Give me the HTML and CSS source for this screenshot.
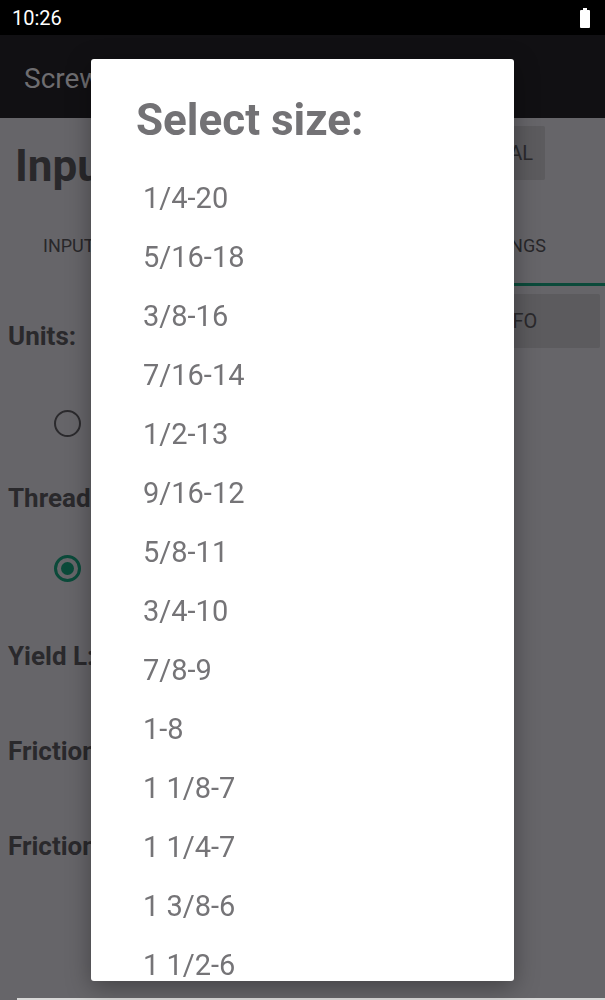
FILE: index.html
```html
<!DOCTYPE html>
<html lang="en">
<head>
    <meta charset="UTF-8">
    <meta name="viewport" content="width=device-width, initial-scale=1.0">
    <title>Screw Calculator</title>
    <link rel="stylesheet" href="styles.css">
</head>
<body>
    <!-- Status bar -->
    <div class="status-bar">
        <span class="clock">10:26</span>
        <svg class="battery" width="10" height="20" viewBox="0 0 10 20">
            <rect x="3" y="0" width="4" height="2" fill="#fff"/>
            <rect x="0" y="2" width="10" height="18" rx="1" fill="#fff"/>
        </svg>
    </div>

    <!-- App bar -->
    <header class="app-bar">
        <h1>Screw Calculator</h1>
    </header>

    <section class="page">
        <div class="page-head">
            <h2>Inputs</h2>
            <button class="flat-btn">TUTORIAL</button>
        </div>

        <nav class="tabs">
            <span class="tab first">INPUT</span>
            <span class="tab">RESULTS</span>
            <span class="tab active">SETTINGS</span>
        </nav>

        <div class="units-row">
            <h3>Units:</h3>
            <button class="flat-btn wide">MORE INFO</button>
        </div>
        <div class="radio-row first">
            <span class="radio"></span>
        </div>

        <h3 class="label">Thread:</h3>
        <div class="radio-row second">
            <span class="radio checked"></span>
        </div>

        <h3 class="label single">Yield L:</h3>
        <h3 class="label single">Friction:</h3>
        <h3 class="label single">Friction:</h3>

        <div class="bottom-edge"></div>
    </section>

    <!-- Size picker dialog -->
    <div class="dialog">
        <h2 class="dialog-title">Select size:</h2>
        <ul class="size-list">
            <li>1/4-20</li>
            <li>5/16-18</li>
            <li>3/8-16</li>
            <li>7/16-14</li>
            <li>1/2-13</li>
            <li>9/16-12</li>
            <li>5/8-11</li>
            <li>3/4-10</li>
            <li>7/8-9</li>
            <li>1-8</li>
            <li>1 1/8-7</li>
            <li>1 1/4-7</li>
            <li>1 3/8-6</li>
            <li>1 1/2-6</li>
        </ul>
    </div>
</body>
</html>
```

FILE: styles.css
```css
/* Reset */
* {
    margin: 0;
    padding: 0;
    box-sizing: border-box;
}
body {
    font-family: 'Roboto', sans-serif;
    background-color: #666569;
    color: #2a292c;
    width: 605px;
    height: 1000px;
    overflow: hidden;
}

/* Status bar */
.status-bar {
    height: 35px;
    background-color: #000;
    color: #fff;
    display: flex;
    align-items: center;
    justify-content: space-between;
    padding: 0 15px 0 12px;
}
.clock {
    font-size: 20px;
}

/* App bar (dimmed) */
.app-bar {
    height: 83px;
    background-color: #111013;
    display: flex;
    align-items: center;
    padding: 4px 0 0 24px;
}
.app-bar h1 {
    font-size: 28px;
    font-weight: 400;
    color: #6e6d70;
}

/* Page content behind dialog */
.page {
    display: flex;
    flex-direction: column;
}
.page-head {
    height: 97px;
    display: flex;
    justify-content: space-between;
    align-items: flex-start;
    padding: 8px 60px 0 15px;
}
.page-head h2 {
    font-size: 44px;
    font-weight: 700;
    color: #29282b;
    margin-top: 14px;
}
.flat-btn {
    font-family: 'Roboto', sans-serif;
    background-color: #5c5b5e;
    border: none;
    border-radius: 2px;
    color: #2a292c;
    font-size: 20px;
    padding: 0 12px;
    height: 54px;
}
.flat-btn.wide {
    width: 230px;
}

.tabs {
    height: 71px;
    display: grid;
    grid-template-columns: repeat(3, 1fr);
}
.tab {
    display: flex;
    align-items: center;
    justify-content: center;
    font-size: 18px;
    color: #28272a;
    padding-bottom: 8px;
    border-bottom: 3px solid transparent;
}
.tab.first {
    justify-content: flex-start;
    padding-left: 43px;
}
.tab.active {
    border-bottom-color: #0b4a3a;
}

.units-row {
    height: 66px;
    display: flex;
    justify-content: space-between;
    align-items: flex-end;
    padding-right: 5px;
}
.units-row .flat-btn {
    margin-bottom: 4px;
}
.units-row h3,
.label {
    font-size: 26px;
    font-weight: 700;
    color: #2a292c;
    padding-left: 8px;
    height: 32px;
    line-height: 32px;
}
.label.single {
    height: 95px;
}

.radio-row {
    padding-left: 54px;
}
.radio-row.first {
    height: 130px;
    padding-top: 58px;
}
.radio-row.second {
    height: 126px;
    padding-top: 41px;
}
.radio {
    width: 27px;
    height: 27px;
    border-radius: 50%;
    border: 2px solid #2b2a2d;
    display: flex;
    align-items: center;
    justify-content: center;
}
.radio.checked {
    border: 3px solid #0b4a3a;
}
.radio.checked::after {
    content: "";
    width: 13px;
    height: 13px;
    border-radius: 50%;
    background-color: #0b4a3a;
}
.bottom-edge {
    position: fixed;
    left: 17px;
    right: 0;
    bottom: 0;
    height: 2px;
    background-color: #d8d8d8;
}

/* Dialog */
.dialog {
    position: absolute;
    left: 91px;
    top: 59px;
    width: 423px;
    height: 922px;
    background-color: #fff;
    border-radius: 3px;
    box-shadow: 0 6px 24px rgba(0, 0, 0, 0.35);
    overflow: hidden;
}
.dialog-title {
    font-size: 44px;
    font-weight: 700;
    color: #737275;
    padding: 36px 0 0 45px;
    line-height: 50px;
    height: 110px;
}
.size-list {
    list-style: none;
}
.size-list li {
    height: 59px;
    line-height: 59px;
    padding-left: 52px;
    font-size: 29px;
    color: #757477;
}
```
